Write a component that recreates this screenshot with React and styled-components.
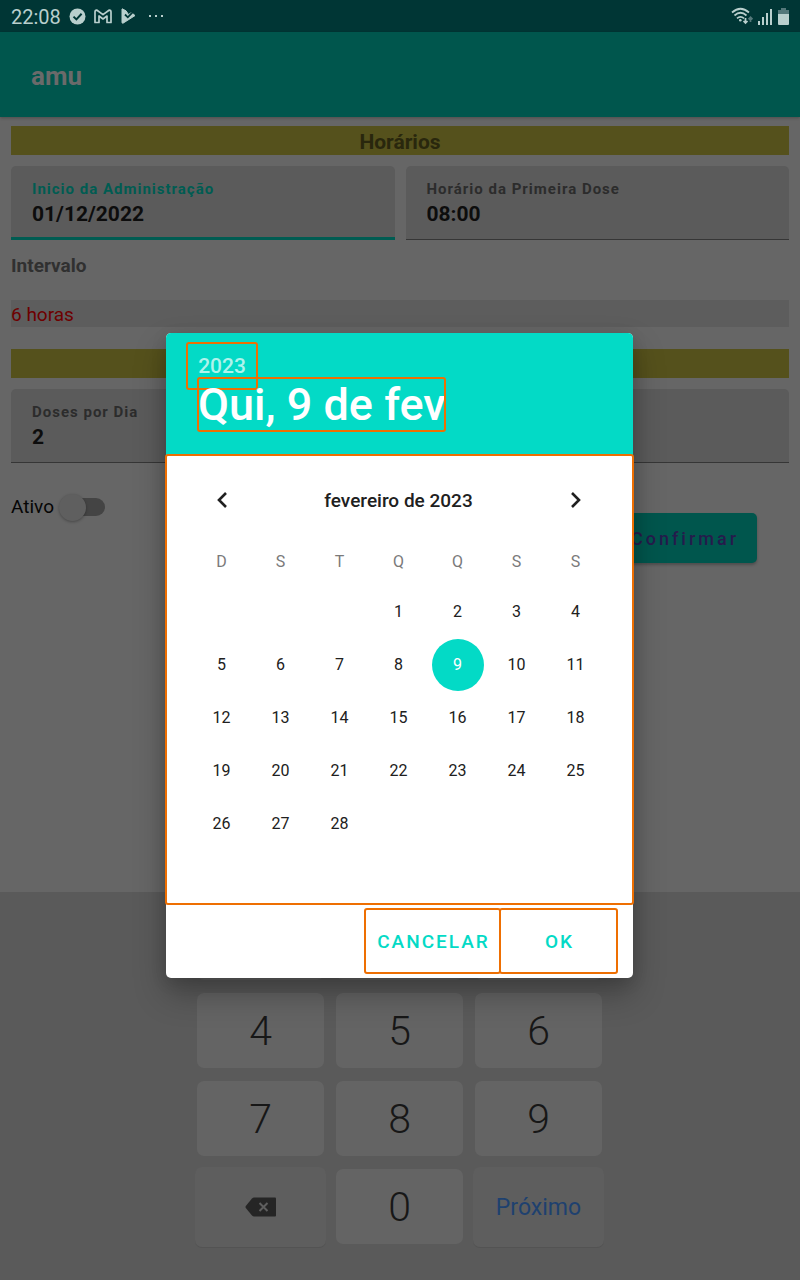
import React, { useState } from "react";
import styled, { createGlobalStyle, css } from "styled-components";

const GlobalStyle = createGlobalStyle`
  * { box-sizing: border-box; }
  body { margin: 0; background: #666666; font-family: Roboto, "Noto Sans", sans-serif; }
  button, input, select { font-family: inherit; }
`;

const accent = "#03dac6";

const marked = css`
  outline: 2px solid #ee6f02;
  outline-offset: -1px;
  border-radius: 2px;
`;

const Screen = styled.div`
  position: relative;
  display: flex;
  flex-direction: column;
  min-height: 100vh;
`;

const StatusBar = styled.header`
  display: flex;
  align-items: center;
  justify-content: space-between;
  height: 32px;
  padding: 0 11px;
  background: #003635;
  color: #b9cfcd;
`;

const StatusGroup = styled.div`
  display: flex;
  align-items: center;
  gap: ${(p) => p.$gap}px;
`;

const Clock = styled.time`
  font-size: 20px;
  line-height: 34px;
  margin-top: 2px;
`;

const AppBar = styled.div`
  display: flex;
  align-items: center;
  height: 85px;
  padding: 2px 31px 0;
  background: #00564d;
  box-shadow: 0 1px 3px rgba(0, 0, 0, 0.25);
`;

const AppTitle = styled.h1`
  margin: 0;
  font-size: 26px;
  line-height: 32px;
  font-weight: 700;
  color: #6a6a6a;
`;

const Form = styled.form`
  flex: 1;
  padding: 9px 11px;
`;

const Banner = styled.h2`
  height: 29px;
  margin: 0;
  background: #55511c;
  color: #29270d;
  text-align: center;
  font-size: 21px;
  line-height: 32px;
  font-weight: 700;
`;

const FieldRow = styled.div`
  display: flex;
  gap: 11px;
  margin-top: 11px;
`;

const Field = styled.label`
  flex: 1;
  min-width: 0;
  height: 74px;
  padding: 12px 21px 0;
  background: #5b5b5b;
  border-radius: 5px 5px 0 0;
  border-bottom: ${(p) => (p.$active ? "3px solid #005c52" : "1px solid #363636")};
`;

const FieldLabel = styled.span`
  display: block;
  height: 21px;
  font-size: 15px;
  line-height: 22px;
  font-weight: 700;
  letter-spacing: 1px;
  color: ${(p) => (p.$active ? "#005c52" : "#2c2c2c")};
`;

const FieldInput = styled.input`
  display: block;
  width: 100%;
  height: 30px;
  padding: 0;
  border: 0;
  outline: 0;
  background: transparent;
  font-size: 21px;
  line-height: 30px;
  font-weight: 700;
  color: #0d0d0d;
`;

const SelectLabel = styled.label`
  display: block;
  margin-top: 14px;
  font-size: 19px;
  line-height: 24px;
  font-weight: 700;
  color: #303030;
`;

const IntervalSelect = styled.select`
  display: block;
  appearance: none;
  width: 100%;
  height: 27px;
  margin: 22px 0;
  padding: 2px 0 0;
  border: 0;
  border-radius: 0;
  background: #5d5d5d;
  color: #6e0000;
  font-size: 19px;
`;

const FormFooter = styled.div`
  display: flex;
  align-items: flex-start;
  justify-content: space-between;
  margin-top: 30px;
  padding-right: 32px;
`;

const SwitchLabel = styled.label`
  display: flex;
  align-items: center;
  gap: 5px;
  font-size: 19px;
  line-height: 28px;
  color: #050505;
`;

const Switch = styled.input`
  appearance: none;
  display: flex;
  align-items: center;
  width: 46px;
  height: 18px;
  margin: 0;
  border-radius: 9px;
  background: linear-gradient(90deg, transparent 10px, #444444 10px);
  &::before {
    content: "";
    width: 27px;
    height: 27px;
    flex: none;
    border-radius: 50%;
    background: #5f5f5f;
    box-shadow: 0 1px 3px rgba(0, 0, 0, 0.3);
  }
`;

const ConfirmButton = styled.button`
  height: 50px;
  margin-top: 20px;
  padding: 0 18px 0 21px;
  border: 0;
  border-radius: 5px;
  background: #00564d;
  box-shadow: 0 2px 3px rgba(0, 0, 0, 0.25);
  color: #251b4c;
  font-size: 18px;
  font-weight: 500;
  letter-spacing: 3px;
`;

const Keyboard = styled.div`
  display: grid;
  grid-template-columns: repeat(3, 127px);
  grid-auto-rows: 75px;
  justify-content: center;
  gap: 13px 12px;
  padding: 13px 1px 36px 0;
  background: #5a5a5a;
`;

const Key = styled.button`
  padding: 0;
  border: 0;
  border-radius: 7px;
  background: #646464;
  color: #171717;
  font-size: 41px;
  font-weight: 300;
`;

const ActionKey = styled(Key)`
  display: flex;
  align-items: center;
  justify-content: center;
  margin: -2px -2px -3px;
  background: #5e5e5e;
  box-shadow: 0 1px 0 #535353;
  color: ${(p) => (p.$link ? "#1e416f" : "#252525")};
  font-size: 23px;
  font-weight: 400;
`;

const Scrim = styled.div`
  position: absolute;
  inset: 0;
  display: flex;
  align-items: center;
  justify-content: center;
  padding: 31px 1px 0 0;
`;

const Dialog = styled.section`
  width: 467px;
  border-radius: 5px;
  background: #ffffff;
  box-shadow: 0 16px 32px rgba(0, 0, 0, 0.28), 0 4px 16px rgba(0, 0, 0, 0.12);
`;

const DialogHeader = styled.div`
  display: flex;
  flex-direction: column;
  align-items: flex-start;
  height: 122px;
  padding: 10px 21px;
  border-radius: 5px 5px 0 0;
  background: ${accent};
`;

const YearButton = styled.button`
  ${marked}
  height: 46px;
  width: 70px;
  padding: 0;
  border: 0;
  background: transparent;
  color: #b0f3ec;
  font-size: 21px;
  font-weight: 500;
`;

const DateTitle = styled.h2`
  ${marked}
  height: 53px;
  width: 247px;
  margin: -11px 0 0 11px;
  color: #ffffff;
  font-size: 45px;
  line-height: 53px;
  font-weight: 500;
  white-space: nowrap;
`;

const Calendar = styled.div`
  ${marked}
  padding: 0 28px 54px 26px;
`;

const MonthBar = styled.div`
  display: flex;
  align-items: center;
  justify-content: space-between;
  height: 90px;
`;

const MonthName = styled.h3`
  margin: 0;
  font-size: 19px;
  line-height: 26px;
  padding-top: 2px;
  font-weight: 500;
  color: #202020;
`;

const ArrowButton = styled.button`
  display: flex;
  align-items: center;
  justify-content: center;
  width: 59px;
  height: 53px;
  padding: 0;
  border: 0;
  background: transparent;
  color: #202020;
`;

const MonthTable = styled.table`
  width: 100%;
  table-layout: fixed;
  border-collapse: collapse;
`;

const Weekday = styled.th`
  height: 40px;
  padding: 0 0 6px;
  font-size: 16px;
  line-height: 34px;
  font-weight: 400;
  color: #7a7a7a;
`;

const DayCell = styled.td`
  height: 53px;
  padding: 0;
  text-align: center;
`;

const DayButton = styled.button`
  display: block;
  width: 52px;
  height: 52px;
  margin: 0 auto;
  padding: 0;
  border: 0;
  border-radius: 50%;
  background: ${(p) => (p.$selected ? accent : "transparent")};
  color: ${(p) => (p.$selected ? "#ffffff" : "#202020")};
  font-size: 16px;
`;

const DialogActions = styled.div`
  display: flex;
  justify-content: flex-end;
  padding: 5px 16px;
`;

const DialogButton = styled.button`
  ${marked}
  width: ${(p) => (p.$wide ? 135 : 117)}px;
  height: 64px;
  padding: 0 0 0 2px;
  border: 0;
  background: transparent;
  color: ${accent};
  font-size: 19px;
  font-weight: 500;
  letter-spacing: 2px;
`;

const CheckCircle = () => (
  <svg width="17" height="17" viewBox="0 0 17 17" aria-hidden="true">
    <circle cx="8.5" cy="8.5" r="8" fill="#b9cfcd" />
    <path d="M4.5 8.6 7.4 11.4 12.6 5.8" fill="none" stroke="#003635" strokeWidth="2" />
  </svg>
);

const MailIcon = () => (
  <svg width="18" height="15" viewBox="0 0 18 15" aria-hidden="true">
    <path
      d="M1 13.5V3Q1 .9 3 1.2L9 5.6 15 1.2Q17 .9 17 3V13.5H13V7L9 10 5 7V13.5Z"
      fill="none"
      stroke="#b9cfcd"
      strokeWidth="1.7"
      strokeLinejoin="round"
    />
  </svg>
);

const PlayCheck = () => (
  <svg width="20" height="16" viewBox="-1 0 20 16" aria-hidden="true">
    <path d="M1.2.8 5 2.800 7.500 6.500 10.500 4.500 14 7.600 2 15.200Q1 15.400 1 14.400V1Z" fill="#b9cfcd" stroke="#b9cfcd" strokeLinejoin="round" />
    <path d="M4 6.500 6.800 9.300 12 3.800" fill="none" stroke="#003635" strokeWidth="1.800" />
  </svg>
);

const MoreDots = () => (
  <svg width="16" height="4" viewBox="0 0 16 4" fill="#b9cfcd" aria-hidden="true">
    <rect x="1" y="1" width="2" height="2" />
    <rect x="7" y="1" width="2" height="2" />
    <rect x="13" y="1" width="2" height="2" />
  </svg>
);

const WifiIcon = () => (
  <svg width="22" height="18" viewBox="0 0 22 18" fill="none" stroke="#b9cfcd" strokeWidth="1.7" aria-hidden="true">
    <path d="M1 5.5Q9.500-2 18 5.500M3.500 8.500Q9.500 3 15.500 8.500M6 11.300Q9.500 8.300 13 11.300" />
    <circle cx="9.300" cy="13.200" r="1.300" fill="#b9cfcd" stroke="none" />
    <path d="M14.500 11V16M12.500 14 14.500 16 16.500 14" />
    <path d="M19.500 15V10.500M17.500 12.300 19.500 10.300 21.500 12.300" stroke="#54787a" />
  </svg>
);

const SignalIcon = () => (
  <svg width="15" height="17" viewBox="0 0 15 17" fill="#b9cfcd" aria-hidden="true">
    <rect x="0" y="13" width="2" height="4" />
    <rect x="4" y="9" width="2" height="8" />
    <rect x="8" y="5" width="2" height="12" />
    <rect x="12" y="1" width="2" height="16" />
  </svg>
);

const BatteryIcon = () => (
  <svg width="11" height="17" viewBox="0 0 11 17" aria-hidden="true">
    <path d="M3 0H8V2H11V6H0V2H3Z" fill="#54787a" />
    <path d="M0 6H11V16Q11 17 10 17H1Q0 17 0 16Z" fill="#b9cfcd" />
  </svg>
);

const BackspaceIcon = () => (
  <svg width="32" height="20" viewBox="0 0 32 20" aria-hidden="true">
    <path d="M9 .5H30Q31 .5 31 1.500V18.500Q31 19.500 30 19.500H9Q8 19.500 7 18.500L.8 11Q.2 10 .8 9L7 1.500Q8 .5 9 .5Z" fill="currentColor" />
    <path d="M14.500 6 22.500 14M22.500 6 14.500 14" stroke="#5e5e5e" strokeWidth="2" />
  </svg>
);

const Chevron = ({ next }) => (
  <svg width="12" height="18" viewBox="0 0 12 18" fill="none" stroke="currentColor" strokeWidth="2.600" aria-hidden="true">
    <path d={next ? "M2 2 9 9 2 16" : "M10 2 3 9 10 16"} />
  </svg>
);

const weekdays = [
  ["D", "domingo"], ["S", "segunda"], ["T", "terça"], ["Q", "quarta"],
  ["Q", "quinta"], ["S", "sexta"], ["S", "sábado"],
];
const firstWeekday = 3;
const weeks = Array.from({ length: 5 }, (_, w) =>
  Array.from({ length: 7 }, (_, d) => {
    const day = w * 7 + d - firstWeekday + 1;
    return day >= 1 && day <= 28 ? day : null;
  })
);

function TextField({ label, value, active, ...rest }) {
  return (
    <Field $active={active}>
      <FieldLabel $active={active}>{label}</FieldLabel>
      <FieldInput type="text" defaultValue={value} {...rest} />
    </Field>
  );
}

function DatePicker() {
  const [selected, setSelected] = useState(9);
  return (
    <Dialog role="dialog" aria-labelledby="picked-date">
      <DialogHeader>
        <YearButton type="button">2023</YearButton>
        <DateTitle id="picked-date">Qui, 9 de fev</DateTitle>
      </DialogHeader>
      <Calendar>
        <MonthBar>
          <ArrowButton type="button" aria-label="Mês anterior"><Chevron /></ArrowButton>
          <MonthName>fevereiro de 2023</MonthName>
          <ArrowButton type="button" aria-label="Próximo mês"><Chevron next /></ArrowButton>
        </MonthBar>
        <MonthTable>
          <thead>
            <tr>
              {weekdays.map(([letter, name]) => (
                <Weekday key={name} scope="col" abbr={name}>{letter}</Weekday>
              ))}
            </tr>
          </thead>
          <tbody>
            {weeks.map((week, w) => (
              <tr key={w}>
                {week.map((day, d) => (
                  <DayCell key={d}>
                    {day && (
                      <DayButton type="button" $selected={day === selected} onClick={() => setSelected(day)}>
                        {day}
                      </DayButton>
                    )}
                  </DayCell>
                ))}
              </tr>
            ))}
          </tbody>
        </MonthTable>
      </Calendar>
      <DialogActions>
        <DialogButton type="button" $wide>CANCELAR</DialogButton>
        <DialogButton type="button">OK</DialogButton>
      </DialogActions>
    </Dialog>
  );
}

export default function App() {
  return (
    <Screen>
      <GlobalStyle />
      <StatusBar>
        <StatusGroup $gap={8}>
          <Clock>22:08</Clock>
          <CheckCircle />
          <MailIcon />
          <PlayCheck />
          <MoreDots />
        </StatusGroup>
        <StatusGroup $gap={5}>
          <WifiIcon />
          <SignalIcon />
          <BatteryIcon />
        </StatusGroup>
      </StatusBar>
      <AppBar><AppTitle>amu</AppTitle></AppBar>
      <Form onSubmit={(e) => e.preventDefault()}>
        <Banner>Horários</Banner>
        <FieldRow>
          <TextField label="Inicio da Administração" value="01/12/2022" active />
          <TextField label="Horário da Primeira Dose" value="08:00" />
        </FieldRow>
        <SelectLabel htmlFor="interval">Intervalo</SelectLabel>
        <IntervalSelect id="interval" defaultValue="6">
          <option value="6">6 horas</option>
        </IntervalSelect>
        <Banner as="div" />
        <FieldRow>
          <TextField label="Doses por Dia" value="2" />
          <TextField aria-label="Dias" />
        </FieldRow>
        <FormFooter>
          <SwitchLabel>Ativo<Switch type="checkbox" role="switch" /></SwitchLabel>
          <ConfirmButton type="submit">Confirmar</ConfirmButton>
        </FormFooter>
      </Form>
      <Keyboard>
        {/* The first row lies behind the dialog. */}
        {[1, 2, 3].map((n) => (
          <Key key={n} type="button" aria-label={String(n)} />
        ))}
        {[4, 5, 6, 7, 8, 9].map((n) => (
          <Key key={n} type="button">{n}</Key>
        ))}
        <ActionKey type="button" aria-label="Apagar"><BackspaceIcon /></ActionKey>
        <Key type="button">0</Key>
        <ActionKey type="button" $link>Próximo</ActionKey>
      </Keyboard>
      <Scrim><DatePicker /></Scrim>
    </Screen>
  );
}
